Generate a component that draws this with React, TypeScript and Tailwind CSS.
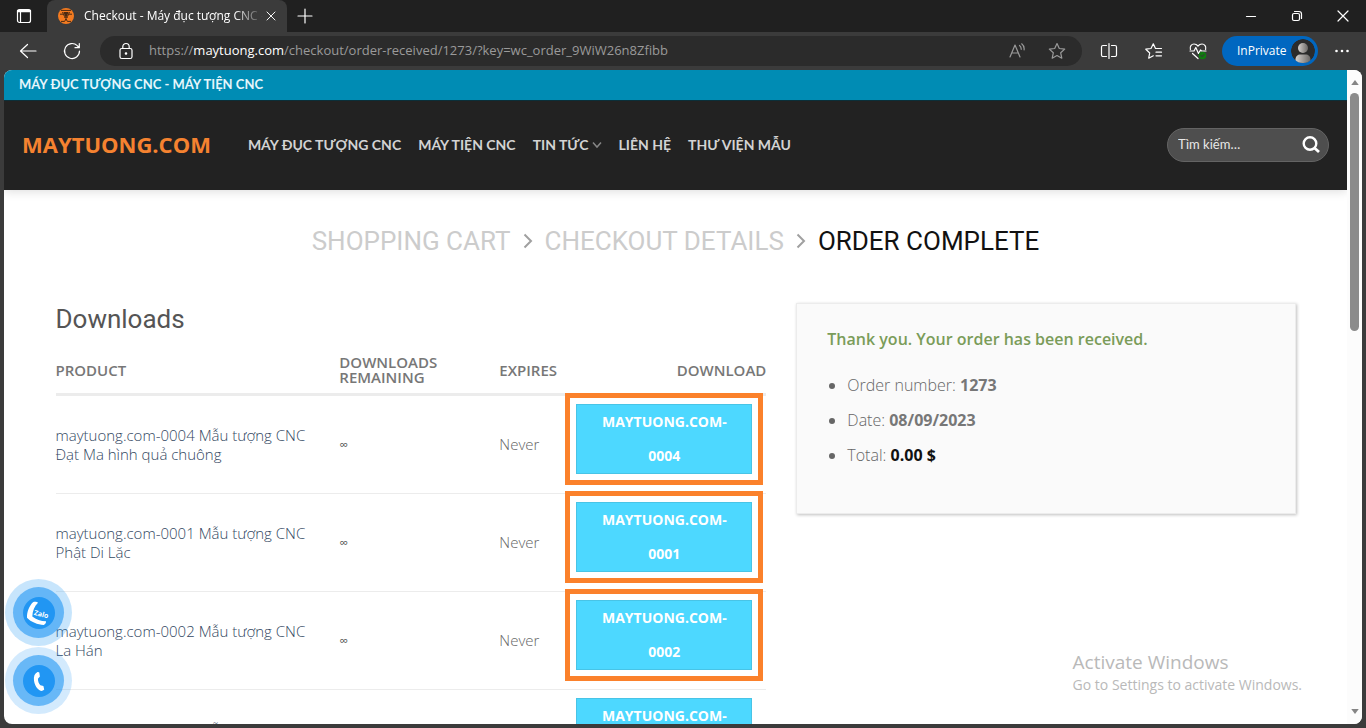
import type { ReactNode } from 'react';

type Download = { sku: string; name: string; marked: boolean };

const downloads: Download[] = [
  { sku: '0004', name: 'Mẫu tượng CNC Đạt Ma hình quả chuông', marked: true },
  { sku: '0001', name: 'Mẫu tượng CNC Phật Di Lặc', marked: true },
  { sku: '0002', name: 'Mẫu tượng CNC La Hán', marked: true },
  { sku: '0003', name: 'Mẫu tượng CNC Quan Âm', marked: false },
];

function Icon({ children, className = 'size-5' }: { children: ReactNode; className?: string }) {
  return (
    <svg
      viewBox="0 0 20 20"
      className={className}
      fill="none"
      stroke="currentColor"
      strokeWidth="1.2"
      strokeLinecap="round"
      strokeLinejoin="round"
      aria-hidden="true"
    >
      {children}
    </svg>
  );
}

function TabBar() {
  return (
    <div className="flex h-8 shrink-0 bg-[#202020] text-white">
      <button aria-label="Tab actions" className="flex w-[47px] items-center justify-center">
        <Icon>
          <rect x="3.5" y="3.5" width="13" height="13" rx="2" />
          <path d="M4 5h12" strokeWidth="2.4" />
          <path d="M6.500 6v10" />
        </Icon>
      </button>
      <div className="flex w-60 items-center rounded-t-lg bg-[#3b3b3b] pr-2 pl-[11px]">
        <svg viewBox="0 0 16 16" className="size-4 shrink-0" aria-hidden="true">
          <circle cx="8" cy="8" r="8" fill="#f47b20" />
          <path
            d="M3 2.400h10M4.500 4l2 4.500M11.500 4l-2 4.500M2 6.200h3M11 6.200h3M6 9.200h4M8 4v8M3 13.400h3.600L8 11l1.400 2.400H13"
            stroke="#4a2a12"
            strokeWidth="1"
            fill="none"
          />
          <path d="M5.500 4h5L9 8.500H7z" fill="#4a2a12" />
        </svg>
        <span className="ml-2.5 min-w-0 flex-1 overflow-hidden text-xs whitespace-nowrap [mask-image:linear-gradient(to_right,#000_84%,transparent_100%)]">
          Checkout - Máy đục tượng CNC - Máy tiện
        </span>
        <button aria-label="Close tab" className="flex size-4 items-center justify-center">
          <Icon className="size-4">
            <path d="M5 5l10 10M15 5L5 15" />
          </Icon>
        </button>
      </div>
      <button aria-label="New tab" className="flex w-9 items-center justify-center">
        <Icon>
          <path d="M10 3v14M3 10h14" />
        </Icon>
      </button>
      <div className="ml-auto flex">
        <button aria-label="Minimize" className="flex w-[46px] items-center justify-center">
          <Icon>
            <path d="M5.500 10.500h9" />
          </Icon>
        </button>
        <button aria-label="Restore" className="flex w-[46px] items-center justify-center">
          <Icon>
            <rect x="5.500" y="7.500" width="7" height="7" rx="1.500" />
            <path d="M7.500 5.500H12a2.500 2.500 0 0 1 2.500 2.500v4.500" />
          </Icon>
        </button>
        <button aria-label="Close" className="flex w-[46px] items-center justify-center">
          <Icon>
            <path d="M5 5l10 10M15 5L5 15" />
          </Icon>
        </button>
      </div>
    </div>
  );
}

function Toolbar() {
  return (
    <div className="flex h-[38px] shrink-0 items-center bg-[#3b3b3b] text-white">
      <button aria-label="Back" className="ml-1.5 flex w-11 items-center justify-center">
        <Icon>
          <path d="M2.500 10h15.500M9.500 3.500L2.500 10l7 6.500" />
        </Icon>
      </button>
      <button aria-label="Refresh" className="flex w-11 items-center justify-center">
        <Icon>
          <path d="M17.500 10a7.500 7.500 0 1 1-2.200-5.300L17.200 6.500M17.300 2.500v4.200h-4.300" />
        </Icon>
      </button>
      <div className="ml-1.5 flex h-[30px] min-w-0 flex-1 items-center rounded-full bg-[#2b2b2b] pr-[15px] pl-4 text-[13px]">
        <Icon className="size-5 shrink-0">
          <rect x="4" y="7.500" width="12" height="10" rx="1.800" />
          <path d="M6.800 7.500V5.700a3.200 3.200 0 0 1 6.400 0v1.800" />
          <circle cx="10" cy="12.500" r=".7" fill="currentColor" />
        </Icon>
        <span className="ml-[13px] min-w-0 flex-1 truncate text-[#9a9a9a]">
          https://<span className="text-white">maytuong.com</span>
          /checkout/order-received/1273/?key=wc_order_9WiW26n8Zfibb
        </span>
        <button aria-label="Read aloud" className="mr-5 text-[#9a9a9a]">
          <Icon>
            <path d="M3 16L8 4l5 12M4.800 12h6.400M12.500 4.500c1.300 1 1.800 2.300 1.700 3.800M14.700 2.800c1.900 1.500 2.700 3.500 2.400 6" />
          </Icon>
        </button>
        <button aria-label="Add to favorites" className="text-[#9a9a9a]">
          <Icon>
            <path d="M10 2.500l2.300 5 5.400.6-4 3.700 1.100 5.400L10 14.500l-4.800 2.700 1.100-5.400-4-3.700 5.400-.6z" />
          </Icon>
        </button>
      </div>
      <div className="flex shrink-0 items-center pl-[5px]">
        <button aria-label="Split screen" className="flex w-11 items-center justify-center">
          <Icon>
            <path d="M10 2.500v15M7.500 4.500H4A1.500 1.500 0 0 0 2.500 6v8A1.500 1.500 0 0 0 4 15.500h3.500M12.500 4.500H16A1.500 1.500 0 0 1 17.500 6v8a1.500 1.500 0 0 1-1.500 1.500h-3.500" />
          </Icon>
        </button>
        <button aria-label="Favorites" className="flex w-[45px] items-center justify-center">
          <Icon>
            <path d="M11.500 7.500L9.300 2.800 7 7.500l-5.200.7L5.700 12l-1 5.200 4.600-2.400M11.500 7.500h6M12 11.200h5.500M12 14.800h5.500" />
          </Icon>
        </button>
        <button aria-label="Browser essentials" className="flex w-[43px] items-center justify-center">
          <Icon>
            <path d="M2.400 8.500C1.500 5.500 3.500 3 6 3c1.800 0 3 .8 4 2 1-1.200 2.200-2 4-2 2.500 0 4.500 2.500 3.600 5.500M2 10h4l1.800-3.500 2.700 6L12.500 9l1 1H18M4.500 12.500L10 17.500" />
            <circle cx="14.500" cy="14.500" r="3.800" fill="#107c10" stroke="none" />
            <path d="M12.900 14.500l1.200 1.200 2-2.200" stroke="#2c4a2c" />
          </Icon>
        </button>
        <button className="ml-[3px] flex h-[30px] w-24 items-center justify-between rounded-full bg-[#0067c0] pr-[3px] pl-[15px] text-xs">
          InPrivate
          <svg viewBox="0 0 24 24" className="size-6 rounded-full" aria-hidden="true">
            <defs>
              <linearGradient id="person" x1="0" x2="1">
                <stop offset="0" stopColor="#d4d0cc" />
                <stop offset="1" stopColor="#6b6866" />
              </linearGradient>
            </defs>
            <circle cx="12" cy="12" r="12" fill="#2b2b2b" />
            <circle cx="12" cy="9" r="5" fill="url(#person)" />
            <path d="M4.500 24v-3.500c0-3 2-5 5-5h5c3 0 5 2 5 5V24z" fill="url(#person)" />
          </svg>
        </button>
        <button aria-label="Settings and more" className="flex w-12 items-center justify-center">
          <Icon>
            <g fill="currentColor" stroke="none">
              <circle cx="4.500" cy="10" r="1.300" />
              <circle cx="10" cy="10" r="1.300" />
              <circle cx="15.500" cy="10" r="1.300" />
            </g>
          </Icon>
        </button>
      </div>
    </div>
  );
}

function SiteHeader() {
  return (
    <header className="shadow-[0_1px_10px_rgba(0,0,0,0.15)]">
      <div className="flex h-[30px] items-center bg-[#008cb4] px-[15px] font-['Lato',sans-serif] text-[13px] font-bold text-[#e6f6fb]">
        MÁY ĐỤC TƯỢNG CNC - MÁY TIỆN CNC
      </div>
      <div className="flex h-[90px] items-center border-t border-[#0b2f39] bg-[#222] pr-[18px] pb-0.5 pl-[18px]">
        <a href="#home" className="text-[22px] font-bold text-[#f58230]">
          MAYTUONG.COM
        </a>
        <nav className="ml-[37px] flex items-center gap-[17px] font-['Lato',sans-serif] text-sm font-bold whitespace-nowrap text-[#d3d3d3]">
          <a href="#duc-tuong">MÁY ĐỤC TƯỢNG CNC</a>
          <a href="#tien">MÁY TIỆN CNC</a>
          <a href="#tin-tuc" className="flex items-center gap-[3px]">
            TIN TỨC
            <svg viewBox="0 0 10 10" className="size-2.5" fill="none" stroke="#858585" strokeWidth="1.500" aria-hidden="true">
              <path d="M1 2.500l4 4.500 4-4.500" />
            </svg>
          </a>
          <a href="#lien-he">LIÊN HỆ</a>
          <a href="#thu-vien">THƯ VIỆN MẪU</a>
        </nav>
        <form className="ml-auto flex h-[34px] w-[162px] items-center rounded-full border border-[#646464] bg-[#4e4e4e] pr-2 pl-2.5">
          <input
            type="search"
            aria-label="Tìm kiếm"
            placeholder="Tìm kiếm…"
            className="min-w-0 flex-1 bg-transparent font-['Lato',sans-serif] text-[13px] text-white outline-none placeholder:text-[#e8e8e8]"
          />
          <button type="button" aria-label="Search" className="text-white">
            <svg viewBox="0 0 18 18" className="size-[18px]" fill="none" stroke="currentColor" strokeWidth="2.400" aria-hidden="true">
              <circle cx="8" cy="7.500" r="6.300" />
              <path d="M12.500 12l4.500 4" strokeWidth="2.800" />
            </svg>
          </button>
        </form>
      </div>
    </header>
  );
}

function Crumbs() {
  const chevron = (
    <svg viewBox="0 0 10 16" className="h-4 w-2.5" fill="none" stroke="#a0a0a0" strokeWidth="2" aria-hidden="true">
      <path d="M1.500 1.500L8 8l-6.500 6.500" />
    </svg>
  );
  return (
    <nav className="flex items-center justify-center gap-3 pt-[34px] font-['Roboto',sans-serif] text-[26px] leading-[34px] text-[#ccc]">
      <a href="#cart">SHOPPING CART</a>
      {chevron}
      <a href="#checkout">CHECKOUT DETAILS</a>
      {chevron}
      <a href="#complete" className="text-[#111]">
        ORDER COMPLETE
      </a>
    </nav>
  );
}

function DownloadsTable() {
  return (
    <section className="col-span-7">
      <h2 className="font-['Roboto',sans-serif] text-[26px] leading-8 text-[#555]">Downloads</h2>
      <table className="mt-5 w-full table-fixed text-left text-[15px] leading-[19px]">
        <colgroup>
          <col />
          <col className="w-[160px]" />
          <col className="w-[77px]" />
          <col className="w-[190px]" />
        </colgroup>
        <thead className="leading-[15px] text-[#777]">
          <tr className="border-b-[3px] border-[#ececec]">
            <th className="pb-2 font-semibold">PRODUCT</th>
            <th className="pb-2 font-semibold">
              DOWNLOADS
              <br />
              REMAINING
            </th>
            <th className="pb-2 font-semibold">EXPIRES</th>
            <th className="pb-2 text-right font-semibold">DOWNLOAD</th>
          </tr>
        </thead>
        <tbody>
          {downloads.map((d) => (
            <tr key={d.sku} className="border-b border-[#ececec] text-[#666]">
              <td className="pr-6 font-light">
                <a href="#product" className="text-[#334862]">
                  maytuong.com-{d.sku} {d.name}
                </a>
              </td>
              <td className="text-xs text-[#555]">∞</td>
              <td className="font-light">Never</td>
              <td className="pt-2 pr-3.5 pb-[19px]">
                <div className="relative">
                  <a
                    href="#download"
                    className="block border border-[#48c4e6] bg-[#4dd8ff] px-5 text-center text-sm leading-[34px] font-bold text-white"
                  >
                    MAYTUONG.COM-
                    <br />
                    {d.sku}
                  </a>
                  {d.marked && <span className="pointer-events-none absolute -inset-[11px] border-[5px] border-[#fb812b]" />}
                </div>
              </td>
            </tr>
          ))}
        </tbody>
      </table>
    </section>
  );
}

function OrderSummary() {
  return (
    <section className="col-span-5 self-start border border-[#ececec] bg-[#fafafa] px-[30px] pt-[23px] pb-[45px] text-base leading-[25px] font-light text-[#666] shadow-[1px_1px_3px_rgba(0,0,0,0.25)]">
      <p className="font-semibold text-[#7a9c59]">Thank you. Your order has been received.</p>
      <ul className="mt-[21px] flex list-disc flex-col gap-2.5 pl-5">
        <li>
          Order number: <strong className="font-bold text-[#777]">1273</strong>
        </li>
        <li>
          Date: <strong className="font-bold text-[#777]">08/09/2023</strong>
        </li>
        <li>
          Total: <strong className="font-bold text-[#111]">0.00 $</strong>
        </li>
      </ul>
    </section>
  );
}

function ContactButtons() {
  return (
    <div className="absolute bottom-2.5 left-px flex flex-col gap-px">
      <a href="#zalo" aria-label="Zalo" className="flex size-[67px] items-center justify-center rounded-full bg-[#2196f3]/25">
        <span className="flex size-[51px] items-center justify-center rounded-full bg-[#2196f3]/60">
          <span className="flex size-8 items-center justify-center rounded-full bg-[#2196f3]">
            <svg viewBox="0 0 32 32" className="size-8" aria-hidden="true">
              <path
                d="M10 5.200c1.500-.8 4-.6 5 .6-3.500 3.500-5.500 8-5.700 13.700 3.700 3 8.500 4.600 13.700 4.800.2 1.500-.8 3.300-2.200 3.600C14.500 27.500 8 25 4 20.700 3.700 14.500 6.500 8.500 10 5.200z"
                fill="#fff"
              />
              <text x="11" y="18" fontSize="7" fontWeight="700" fill="#fff" transform="rotate(15 12 16)">
                Zalo
              </text>
            </svg>
          </span>
        </span>
      </a>
      <a href="#phone" aria-label="Phone" className="flex size-[67px] items-center justify-center rounded-full bg-[#2196f3]/20">
        <span className="flex size-[51px] items-center justify-center rounded-full bg-[#2196f3]/60">
          <span className="flex size-8 items-center justify-center rounded-full bg-[#2196f3]">
            <svg viewBox="0 0 32 32" className="size-8" aria-hidden="true">
              <path
                d="M14.500 7c-3 1.500-4 4.500-3.500 8.500.6 4.500 3 8.500 6.500 10.300 1.300.3 3-.3 3.700-1.300l-.8-3.600-3-.6c-1.500-1.500-2.500-4-2.500-6.500l2-2.300-.6-3.900c-.4-.6-1.100-.8-1.800-.6z"
                fill="#fff"
              />
            </svg>
          </span>
        </span>
      </a>
    </div>
  );
}

function Scrollbar() {
  return (
    <div className="flex w-[15px] shrink-0 flex-col items-center justify-between bg-[#fcfcfc] pt-2.5 pb-2.5" aria-hidden="true">
      <div className="flex w-full flex-col items-center gap-2">
        <svg viewBox="0 0 9 6" className="h-[5px] w-2">
          <path d="M4.500 0L9 6H0z" fill="#858585" />
        </svg>
        <div className="h-[238px] w-[9px] rounded-full bg-[#8b8b8b]" />
      </div>
      <svg viewBox="0 0 9 6" className="h-[5px] w-2">
        <path d="M0 0h9L4.500 6z" fill="#858585" />
      </svg>
    </div>
  );
}

export default function App() {
  return (
    <div className="flex h-screen flex-col bg-[#3b3b3b] font-['Open_Sans',sans-serif]">
      <TabBar />
      <Toolbar />
      <div className="relative mx-1 mb-1 flex min-h-0 flex-1 overflow-hidden rounded-lg bg-white">
        <div className="min-w-0 flex-1 overflow-hidden">
          <SiteHeader />
          <Crumbs />
          <main className="mx-auto mt-[45px] grid max-w-[1240px] grid-cols-12 gap-[30px]">
            <DownloadsTable />
            <OrderSummary />
          </main>
        </div>
        <Scrollbar />
        <ContactButtons />
        <div className="pointer-events-none absolute right-[60px] bottom-7 text-[#b9b9b9]">
          <p className="text-[19px] leading-6">Activate Windows</p>
          <p className="text-sm leading-[22px]">Go to Settings to activate Windows.</p>
        </div>
      </div>
    </div>
  );
}
